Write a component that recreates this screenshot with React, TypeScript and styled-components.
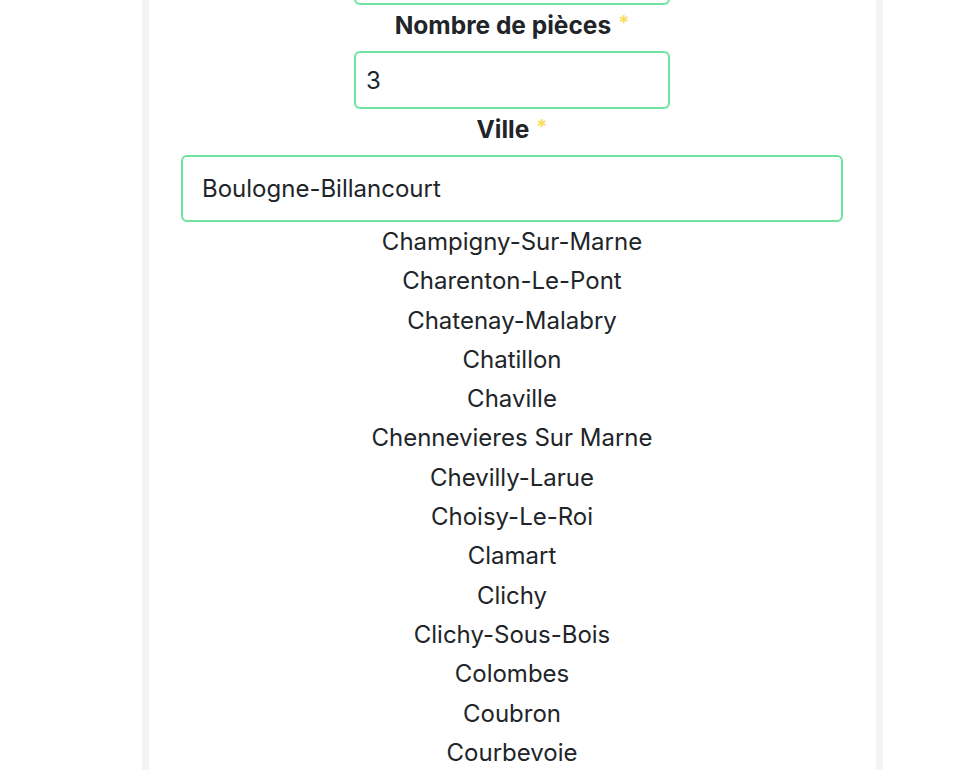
import React from "react";
import styled, { createGlobalStyle } from "styled-components";

const Global = createGlobalStyle`
  html, body { margin: 0; padding: 0; background: #ffffff; }
  body { font-family: Inter, "Noto Sans", sans-serif; color: #212529; overflow: hidden; }
`;

const Page = styled.div`
  width: 964px;
  height: 770px;
  overflow: hidden;
  display: flex;
`;

const Panel = styled.div`
  box-sizing: border-box;
  margin-left: 142px;
  width: 741px;
  border-left: 7px solid #f3f4f6;
  border-right: 7px solid #f3f4f6;
  background: #ffffff;
  padding: 0 33px 0 32px;
  min-height: 800px;
`;

const Form = styled.div`
  margin-top: -53px;
  display: flex;
  flex-direction: column;
  align-items: center;
`;

const Label = styled.label`
  display: block;
  height: 36px;
  font-weight: 700;
  font-size: 24.5px;
  line-height: 36px;
  padding-top: 2px;
  margin-bottom: 8px;
  text-align: center;
`;

const Star = styled.span`
  color: #f8e060;
  margin-left: 7px;
  font-size: 20px;
  line-height: 0;
  vertical-align: 4px;
`;

const Input = styled.input<{ $wide?: boolean }>`
  box-sizing: border-box;
  width: ${(p) => (p.$wide ? "662px" : "316px")};
  height: ${(p) => (p.$wide ? "67px" : "58px")};
  padding: 0 ${(p) => (p.$wide ? "19px" : "10px")};
  border: 2px solid #6ee3a0;
  border-radius: 6px;
  font-family: Inter, "Noto Sans", sans-serif;
  font-size: 24px;
  color: #212529;
  background: #ffffff;
  outline: none;
`;

const List = styled.ul`
  list-style: none;
  margin: 0;
  padding: 0;
  width: 100%;
  text-align: center;
`;

const Item = styled.li`
  font-size: 24px;
  line-height: 39.3px;
  color: #212529;
`;

const cities = [
  "Champigny-Sur-Marne",
  "Charenton-Le-Pont",
  "Chatenay-Malabry",
  "Chatillon",
  "Chaville",
  "Chennevieres Sur Marne",
  "Chevilly-Larue",
  "Choisy-Le-Roi",
  "Clamart",
  "Clichy",
  "Clichy-Sous-Bois",
  "Colombes",
  "Coubron",
  "Courbevoie",
];

export default function App() {
  return (
    <>
      <Global />
      <Page>
        <Panel>
          <Form>
            <Input defaultValue="75" />
            <Label>
              Nombre de pièces<Star>*</Star>
            </Label>
            <Input defaultValue="3" />
            <Label>
              Ville<Star>*</Star>
            </Label>
            <Input $wide defaultValue="Boulogne-Billancourt" />
            <List>
              {cities.map((c) => (
                <Item key={c}>{c}</Item>
              ))}
            </List>
          </Form>
        </Panel>
      </Page>
    </>
  );
}
